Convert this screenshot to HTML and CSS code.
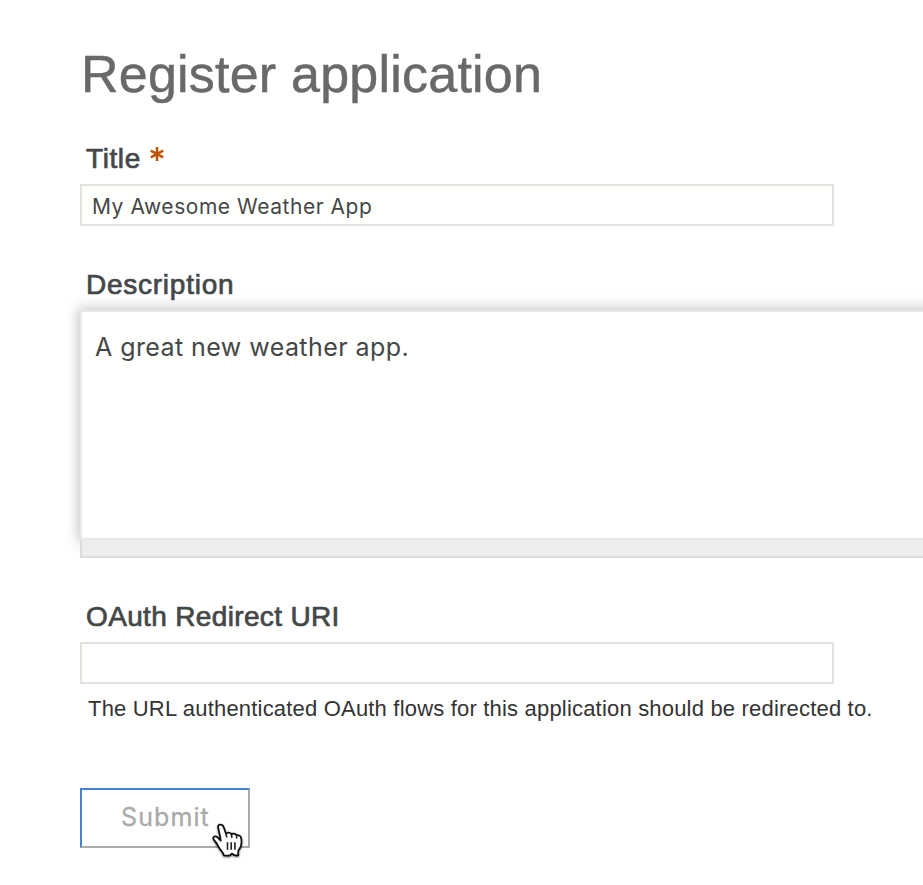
FILE: index.html
```html
<!DOCTYPE html>
<html lang="en">
<head>
<meta charset="utf-8">
<title>Register application</title>
<link rel="stylesheet" href="styles.css">
</head>
<body>
<main class="page">
<h1>Register application</h1>
<form class="form">
<div class="field field-title">
<label><span class="t-title">Title</span><svg class="star" viewBox="0 0 14 14"><path d="M7 0v14M.8 3.7l12.4 6.6M13.2 3.7L.8 10.3"/></svg></label>
<div class="input"><span class="t-value">My Awesome Weather App</span></div>
</div>
<div class="field field-desc">
<label><span class="t-desc">Description</span></label>
<div class="area"><span class="t-area">A great new weather app.</span></div>
<div class="grip"></div>
</div>
<div class="field field-uri">
<label><span class="t-uri">OAuth Redirect URI</span></label>
<div class="input"></div>
<p class="help">The URL authenticated OAuth flows for this application should be redirected to.</p>
</div>
<div class="submit"><span class="t-submit">Submit</span>
<svg class="cursor" viewBox="0 0 36 40"><path class="hand" d="M8.300 6.200C7.500 3.500 8.900 2.600 10.600 2.600c1.600 0 2.500 1 3.100 2.600l2.300 6.600c.6-1.500 4.700-1.700 5.400.6 1-1.300 4.300-1 5.100 1.100 1.600-.9 4.100.1 4.600 2.300.5 2.600.5 5.700-.2 8.200-.5 2-2.200 3.500-2.600 5-.3 1.300 0 2.700 0 4.300-1.600.4-3 .2-4.300-.1-.8-.5-1.300-1.500-2-1.500s-1.200 1.400-2.100 1.800c-1.800.3-4.400.1-6.100-.1-.2-2.300-1.600-3.700-3-5.300-2.200-2.600-3-5.500-5.300-8.200-1.400-1.600-2.600-2.900-2.300-4.100.4-1.800 2.600-1.900 4.300-.5l3.200 3.200c-.4-4.100-1.600-8-2.400-12.300z"/><path class="knuckles" d="M16 11.500l.8 4M21.500 12.500l.4 3.300M26.600 13.500l.1 3"/><path class="lines" d="M17.500 20.200v7.600M21.200 20.200v7.600M24.900 20.200v7.600"/></svg>
</div>
</form>
</main>
</body>
</html>
```
FILE: styles.css
```css
*{box-sizing:border-box}
body{margin:0;background:#fff;font-family:"Liberation Sans",sans-serif;color:#444748;overflow:hidden}
.page{height:885px;padding:42px 0 0 80px;overflow:hidden}
h1{margin:0;height:64px;padding-left:1px;font-size:52px;line-height:64px;font-weight:400;letter-spacing:.22px;color:#696969;-webkit-text-stroke:.5px #696969}
.form{display:flex;flex-direction:column}
label{display:flex;align-items:center;height:32px;padding:2px 0 0 6px;font-size:28px;white-space:nowrap;-webkit-text-stroke:.7px #444748}
.t-title{letter-spacing:.6px}
.t-desc{letter-spacing:.75px}
.t-uri{letter-spacing:.35px}
.field-title{margin-top:36px}
.star{width:14px;height:14px;margin:-11px 0 0 9px;stroke:#c05200;stroke-width:2.5;fill:none}
.input{width:754px;height:42px;margin-top:10px;border:2px solid #e2e2de;background:#fffffd;padding-left:10px;line-height:42px}
.t-value{font:21px/42px Inter,sans-serif;letter-spacing:.54px}
.field-desc{margin-top:42px}
.area{height:230px;margin:10px -20px 0 0;border:2px solid #e8e8e8;background:#fffffd;box-shadow:0 0 12px 2px #c4c4c4;padding:16px 13px}
.t-area{font:25px/38px Inter,sans-serif;letter-spacing:.43px}
.grip{position:relative;height:18px;background:#ededed;border:2px solid #dcdcdc;border-width:0 0 2px 2px}
.field-uri{margin-top:42px}
.help{margin:8px 0 0 8px;height:34px;font-size:22px;line-height:34px;letter-spacing:.19px;white-space:nowrap;color:#333}
.submit{position:relative;width:170px;height:60px;margin-top:62px;padding-left:39px;border:2px solid #aaa;border-top-color:#4682d3;border-left-color:#4682d3}
.t-submit{font:25px/54px Inter,sans-serif;letter-spacing:1.1px;color:#aaa;-webkit-text-stroke:.3px #aaa}
.cursor{position:absolute;left:128px;top:32px;width:36px;height:40px;filter:drop-shadow(0 1.5px 1px #0007)}
.hand{fill:#fff;stroke:#111;stroke-width:1.8;stroke-linejoin:round}
.knuckles,.lines{fill:none;stroke:#222;stroke-width:1.6}
```
